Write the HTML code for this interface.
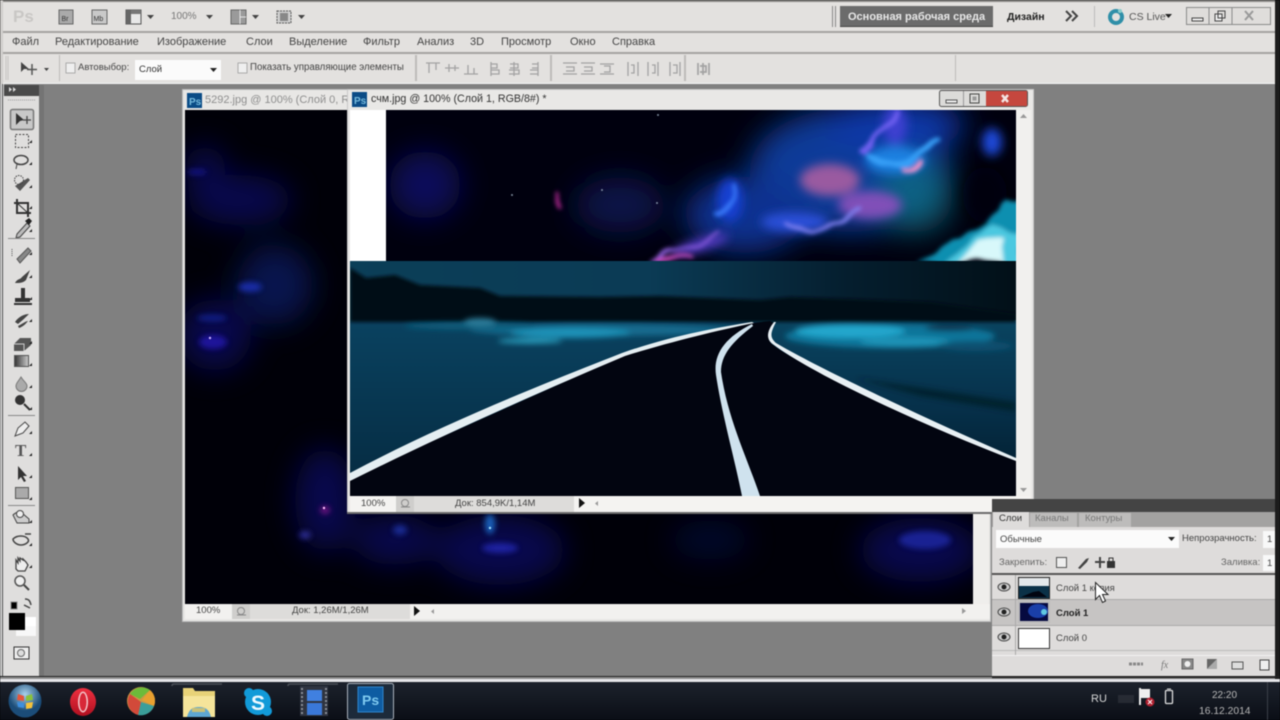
<!DOCTYPE html>
<html><head><meta charset="utf-8"><style>
html,body{margin:0;padding:0;background:#000}
#r{position:relative;width:1280px;height:720px;overflow:hidden;background:#808080;font-family:"Liberation Sans",sans-serif;font-size:11px;color:#444;filter:blur(.45px)}
.a{position:absolute}
.t{position:absolute;white-space:nowrap;line-height:12px}
svg{position:absolute;display:block}
</style></head><body><div id="r">
<div class="a" style="left:0;top:0;width:1275px;height:83px;background:#e3e1df"></div>
<div class="a" style="left:0;top:0;width:1275px;height:2px;background:#8a8886"></div>
<div class="a" style="left:0;top:31px;width:1275px;height:2px;background:#a5a3a1"></div>
<div class="a" style="left:0;top:52px;width:1275px;height:2px;background:#a5a3a1"></div>
<div class="a" style="left:0;top:83px;width:1275px;height:1px;background:#f5f5f5"></div>
<div class="a" style="left:1275px;top:0;width:5px;height:682px;background:#1c1c1c"></div>
<div class="a" style="left:0;top:0;width:3px;height:84px;background:#cfcdcb"></div>

<!-- app bar icons -->
<svg style="left:0;top:0" width="320" height="32" fill="none" stroke="#777">
<text x="13" y="22" font-family="Liberation Sans" font-size="17" font-weight="bold" fill="#c9c7c5" stroke="none">Ps</text>
<rect x="59" y="10" width="14" height="14" fill="#aaa" stroke="#666"/><text x="61.500" y="21" font-size="7" fill="#333" stroke="none" font-family="Liberation Sans">Br</text>
<rect x="92" y="10" width="15" height="14" fill="#c9c9c9" stroke="#666"/><text x="93.500" y="21" font-size="7" fill="#333" stroke="none" font-family="Liberation Sans">Mb</text>
<rect x="126" y="10" width="15" height="14" fill="#e8e8e8" stroke="#555"/><rect x="126" y="10" width="5" height="14" fill="#666" stroke="none"/><rect x="131" y="10" width="10" height="4" fill="#777" stroke="none"/>
<path d="M147 15h7l-3.500 4z" fill="#444" stroke="none"/>
<path d="M206 15h7l-3.500 4z" fill="#444" stroke="none"/>
<rect x="231" y="10" width="15" height="14" fill="#9a9a9a" stroke="#666"/><path d="M240 10v14M240 17h6" stroke="#e5e5e5"/>
<path d="M252 15h7l-3.500 4z" fill="#444" stroke="none"/>
<rect x="277" y="11" width="14" height="12" fill="#cfcfcf" stroke="#555" stroke-dasharray="2 1"/><rect x="280" y="13" width="8" height="8" fill="#888" stroke="none"/>
<path d="M298 15h7l-3.500 4z" fill="#444" stroke="none"/>
</svg>
<span class="t" style="left:171px;top:11px;color:#777;font-size:10px">100%</span>

<div class="a" style="left:832px;top:6px;width:1px;height:21px;background:#888"></div>
<div class="a" style="left:835px;top:6px;width:1px;height:21px;background:#888"></div>
<div class="a" style="left:840px;top:6px;width:153px;height:21px;background:#6b6b6b;border-bottom:1px solid #444;box-sizing:border-box"></div>
<span class="t" style="left:848px;top:11px;color:#e8e8e8;font-weight:bold;font-size:11px">Основная рабочая среда</span>
<span class="t" style="left:1007px;top:11px;color:#222;font-weight:bold;font-size:10.5px">Дизайн</span>
<svg style="left:1064px;top:9px" width="18" height="15" fill="none" stroke="#444" stroke-width="2"><path d="M2 2l5 5-5 5M8 2l5 5-5 5"/></svg>
<div class="a" style="left:1094px;top:6px;width:1px;height:21px;background:#bbb"></div>
<svg style="left:1105px;top:6px" width="22" height="22" fill="none"><circle cx="11" cy="11" r="6" stroke="#2f8fa8" stroke-width="4"/><circle cx="15" cy="5" r="2" fill="#8cc"/></svg>
<span class="t" style="left:1129px;top:11px;color:#555;font-size:10.5px">CS Live</span>
<svg style="left:1164px;top:14px" width="9" height="6"><path d="M1 0h7l-3.500 4z" fill="#222"/></svg>
<svg style="left:1185px;top:7px" width="88" height="20" fill="#dfdddb" stroke="#8a8a8a"><rect x="1.500" y=".5" width="84" height="17"/><path d="M24 0v18M47 0v18"/><rect x="7" y="11" width="11" height="3" fill="#eee" stroke="#444"/><rect x="30" y="7" width="7" height="7" fill="#eee" stroke="#444"/><rect x="33" y="4" width="7" height="7" fill="none" stroke="#444"/><path d="M60 4l8 9M68 4l-8 9" stroke="#999" stroke-width="2"/></svg>

<!-- menu -->
<span class="t" style="left:12px;top:36px">Файл</span>
<span class="t" style="left:55px;top:36px">Редактирование</span>
<span class="t" style="left:157px;top:36px">Изображение</span>
<span class="t" style="left:246px;top:36px">Слои</span>
<span class="t" style="left:289px;top:36px">Выделение</span>
<span class="t" style="left:363px;top:36px">Фильтр</span>
<span class="t" style="left:417px;top:36px">Анализ</span>
<span class="t" style="left:470px;top:36px">3D</span>
<span class="t" style="left:501px;top:36px">Просмотр</span>
<span class="t" style="left:570px;top:36px">Окно</span>
<span class="t" style="left:612px;top:36px">Справка</span>

<!-- options -->
<svg style="left:0;top:54px" width="960" height="29" fill="none" stroke="#999">
<path d="M6 2v24M8 2v24" stroke="#c5c3c1"/>
<path d="M21 8v10l3-3h5z" fill="#444" stroke="none"/><path d="M32 10v11M27 15.500h10" stroke="#555" stroke-width="1.500"/>
<path d="M44 14h5l-2.500 3z" fill="#444" stroke="none"/>
<path d="M59.500 1v26M415.500 1v26M416.500 1v26M550.500 1v26M551.500 1v26M684.500 1v26M685.500 1v26M955.500 1v26" stroke="#bdbbb9"/>
<rect x="66" y="9" width="9" height="10" fill="#efefef" stroke="#aaa"/>
<rect x="238" y="9" width="9" height="10" fill="#efefef" stroke="#aaa"/>
<g stroke="#a3a3a3" stroke-width="1.300"><path d="M426 9h14M429 9v10M436 9v7M445 14h14M449 10v8M455 11v6M464 20h14M468 11v9M474 14v6"/><path d="M491 8v14M491 10h6v4h-6M491 16h8v4h-8M514 8v14M510 10h8v4h-8M509 16h10v4h-10M538 8v14M532 10h6v4h-6M530 16h8v4h-8"/><path d="M563 9h14M566 13h8v4h-8M563 20h14M581 9h14M584 13h8v4h-8M581 20h14M600 20h14M604 12h6v6h-6M600 10h14"/><path d="M628 8v14M631 11h3v8h-3M638 8v14M648 8v14M652 11h3v8h-3M658 8v14M670 8v14M680 8v14M673 11h4v8h-4"/><path d="M698 9v12M703 9v12M709 9v12M700 12h6v6h-6" stroke-width="1.700"/></g>
</svg>
<span class="t" style="left:78px;top:62px;font-size:9.5px">Автовыбор:</span>
<div class="a" style="left:135px;top:60px;width:86px;height:20px;background:#fbfbfb"></div>
<span class="t" style="left:139px;top:64px;font-size:9.5px;color:#333">Слой</span>
<svg style="left:210px;top:68px" width="8" height="6"><path d="M0 0h7l-3.500 4z" fill="#222"/></svg>
<span class="t" style="left:250px;top:62px;font-size:9.7px">Показать управляющие элементы</span>

<!-- toolbox -->
<div class="a" style="left:0;top:84px;width:4px;height:598px;background:#d8d8d8"></div>
<div class="a" style="left:2px;top:84px;width:1px;height:598px;background:#555"></div>
<div class="a" style="left:4px;top:85px;width:35px;height:592px;background:#dfdedd"></div>
<div class="a" style="left:4px;top:85px;width:35px;height:11px;background:#4a4a4a"></div>
<div class="a" style="left:39px;top:85px;width:5px;height:592px;background:#747474"></div>
<svg style="left:0;top:84px" width="44" height="596" fill="none">
<path d="M9 3l3 2.500-3 2.500zM13 3l3 2.500-3 2.500z" fill="#ddd"/>
<path d="M8 16h27" stroke="#999" stroke-dasharray="1 1"/>
<rect x="10.500" y="25.500" width="23" height="20" rx="2" fill="#c8c8c8" stroke="#777" stroke-width="1.500"/>
<path d="M16 29v12l4-4 4-1z" fill="#333"/><path d="M27 32v8M23 36h8" stroke="#444" stroke-width="1.300"/>
<rect x="15.500" y="50.500" width="13" height="13" stroke="#444" stroke-dasharray="2 1.500"/>
<ellipse cx="21" cy="76" rx="7" ry="4.500" stroke="#444" stroke-width="1.500"/><path d="M17 80l-1 5" stroke="#444"/>
<path d="M15 102l13-8 2 2-10 11z" fill="#555"/><circle cx="19" cy="96" r="4.500" stroke="#444" stroke-dasharray="1.500 1"/>
<path d="M17 115v14h14M14 119h14v14" stroke="#333" stroke-width="2"/><path d="M17 119l11 10" stroke="#333"/>
<path d="M17 150l10-11 3 3-10 11-4 1z" fill="#bbb" stroke="#444"/><path d="M25 137l4-3 3 3-3 4z" fill="#222"/>
<path d="M8 154.500h27" stroke="#888"/>
<path d="M17 175l11-11 3 3-11 12z" fill="#888" stroke="#555"/><path d="M12 165v8" stroke="#555" stroke-dasharray="1 1"/>
<path d="M15 199c3-5 5-3 7-6l8-7-4 10c-3 3-6 3-11 3z" fill="#444"/>
<path d="M21 204h4v10h-4zM15 214h15v4h-15zM14 219h18v2h-18z" fill="#333"/>
<path d="M15 238c4-6 10-8 14-8-3 3-6 6-11 10zM18 242c4-2 8-5 10-5-3 4-6 6-9 7z" fill="#444"/>
<path d="M14 260l6-6h11v7l-7 6h-10z" fill="#555"/><path d="M14 260h10v7" stroke="#ccc"/>
<defs><linearGradient id="tg"><stop offset="0" stop-color="#333"/><stop offset="1" stop-color="#ccc"/></linearGradient></defs>
<rect x="14.500" y="271.500" width="14" height="11" fill="url(#tg)" stroke="#555"/>
<path d="M21 293c-3 5-5 6-5 9a5 5 0 0 0 11 0c0-3-3-4-6-9z" fill="#aaa" stroke="#777"/>
<circle cx="20" cy="316" r="5" fill="#333"/><path d="M24 320l6 6" stroke="#333" stroke-width="2"/>
<path d="M8 331.500h27" stroke="#888"/>
<path d="M15 352l3-8 7-6 4 4-6 7z" fill="#eee" stroke="#444"/>
<text x="15" y="372" font-family="Liberation Serif" font-size="17" font-weight="bold" fill="#555">T</text>
<path d="M18 382v14l3-3 3 5 2-1-3-5h4z" fill="#333"/>
<rect x="15.500" y="403.500" width="13" height="11" fill="#aaa" stroke="#555"/>
<path d="M8 421.500h27" stroke="#888"/>
<path d="M13 431c3-3 7-4 9-2l7 6v4h-12z" fill="#ccc" stroke="#444"/><circle cx="20" cy="430" r="3.500" fill="#eee" stroke="#444"/>
<path d="M13 455c4-4 12-4 15 0 2 3-3 6-7 6s-8-3-8-6zM25 450h6" stroke="#444" stroke-width="1.500"/>
<path d="M16 485v-9l2 3v-5l2 3v-3l3 2v-1l3 3 2 3-3 6h-7z" fill="#eee" stroke="#444" stroke-width="1.300"/>
<circle cx="20" cy="497" r="5" fill="#eee" stroke="#555" stroke-width="1.500"/><path d="M24 501l5 5" stroke="#444" stroke-width="2"/>
<rect x="11" y="518" width="6" height="7" fill="#000" stroke="#888"/>
<path d="M25 515c4 0 5 2 6 6M24 521l6 3" stroke="#444" stroke-width="1.500"/>
<rect x="25" y="533" width="11" height="14" fill="#fff"/><rect x="16" y="542" width="20" height="10" fill="#f8f8f8"/>
<rect x="9" y="529" width="16" height="17" fill="#000"/>
<rect x="14" y="563" width="15" height="12" fill="#eee" stroke="#333"/><circle cx="21" cy="569" r="3.500" stroke="#666" fill="#ddd"/>
<g fill="#222"><path d="M32 59h-3l3-3zM32 81h-3l3-3zM32 104h-3l3-3zM32 125h-3l3-3zM32 148h-3l3-3zM32 171h-3l3-3zM32 194h-3l3-3zM32 216h-3l3-3zM32 238h-3l3-3zM32 260h-3l3-3zM32 282h-3l3-3zM32 304h-3l3-3zM32 326h-3l3-3zM32 350h-3l3-3zM32 372h-3l3-3zM32 394h-3l3-3zM32 416h-3l3-3zM32 439h-3l3-3zM32 462h-3l3-3zM32 484h-3l3-3z"/></g>
</svg>

<!-- back window -->
<div class="a" style="left:182px;top:89px;width:809px;height:533px;background:#e8e7e5;border:1px solid #bbb;box-sizing:border-box"></div>
<svg style="left:187px;top:93px" width="15" height="15"><rect width="15" height="15" fill="#0b4c86"/><text x="2" y="12" font-size="10" fill="#7bd" font-weight="bold" font-family="Liberation Sans">Ps</text></svg>
<span class="t" style="left:205px;top:94px;color:#8e8e8e">5292.jpg @ 100% (Слой 0, R</span>
<svg style="left:185px;top:110px" width="788" height="494" viewBox="185 110 788 494">
<defs>
<filter id="b3" x="-100%" y="-100%" width="300%" height="300%"><feGaussianBlur stdDeviation="3"/></filter>
<filter id="b5" x="-100%" y="-100%" width="300%" height="300%"><feGaussianBlur stdDeviation="5"/></filter>
<filter id="b8" x="-100%" y="-100%" width="300%" height="300%"><feGaussianBlur stdDeviation="8"/></filter>
<filter id="b15" x="-100%" y="-100%" width="300%" height="300%"><feGaussianBlur stdDeviation="15"/></filter>
<filter id="b1" x="-30%" y="-30%" width="160%" height="160%"><feGaussianBlur stdDeviation="1.500"/></filter>
<filter id="ds" x="-20%" y="-20%" width="140%" height="140%"><feTurbulence type="fractalNoise" baseFrequency=".03" numOctaves="2" seed="4" result="n"/><feDisplacementMap in="SourceGraphic" in2="n" scale="18" xChannelSelector="R" yChannelSelector="G"/><feGaussianBlur stdDeviation="2"/></filter>
</defs>
<rect x="185" y="110" width="788" height="494" fill="#000008"/>
<g filter="url(#b15)" fill="#0a0e78" opacity=".62">
<ellipse cx="240" cy="200" rx="52" ry="25"/><ellipse cx="275" cy="285" rx="38" ry="40" fill="#0a2078"/><ellipse cx="215" cy="335" rx="36" ry="36"/><ellipse cx="325" cy="500" rx="30" ry="52"/>
<ellipse cx="500" cy="550" rx="65" ry="35"/><ellipse cx="920" cy="550" rx="60" ry="32"/><ellipse cx="395" cy="540" rx="42" ry="25"/><ellipse cx="710" cy="540" rx="40" ry="20" opacity=".5"/>
<ellipse cx="205" cy="170" rx="20" ry="25"/>
</g>
<g filter="url(#b3)" opacity=".85">
<ellipse cx="250" cy="287" rx="12" ry="5" fill="#1a30b8"/><ellipse cx="212" cy="318" rx="15" ry="3" fill="#12259a"/>
<ellipse cx="213" cy="342" rx="14" ry="7" fill="#2018a8"/><ellipse cx="197" cy="172" rx="10" ry="3" fill="#16168e"/>
<ellipse cx="490" cy="524" rx="5" ry="10" fill="#1c70d0"/><ellipse cx="500" cy="548" rx="18" ry="5" fill="#2028b0"/><ellipse cx="400" cy="530" rx="7" ry="5" fill="#1a30a0"/>
<ellipse cx="925" cy="540" rx="26" ry="9" fill="#1a28a0"/><ellipse cx="325" cy="510" rx="5" ry="4" fill="#80188a"/><ellipse cx="305" cy="535" rx="6" ry="4" fill="#3030a0"/>
</g>
<circle cx="210" cy="338" r="1.200" fill="#c8b0ff"/><circle cx="324" cy="508" r="1.200" fill="#ffc0ff"/><circle cx="490" cy="528" r="1.200" fill="#a0e0ff"/>
</svg>
<div class="a" style="left:973px;top:110px;width:16px;height:494px;background:#efeeec"></div>
<div class="a" style="left:185px;top:604px;width:805px;height:15px;background:#f2f1ef"></div>
<div class="a" style="left:232px;top:604px;width:18px;height:15px;background:#cfcecc"></div>
<div class="a" style="left:250px;top:604px;width:160px;height:15px;background:#dddcda"></div>
<span class="t" style="left:196px;top:605px;font-size:9.5px">100%</span>
<svg style="left:236px;top:606px" width="12" height="11" fill="none" stroke="#888"><circle cx="5" cy="5" r="3.500"/><path d="M1 9h9"/></svg>
<span class="t" style="left:292px;top:605px;font-size:9.5px">Док: 1,26M/1,26M</span>
<svg style="left:414px;top:605px" width="20" height="13"><path d="M0 1l6 5-6 5z" fill="#111"/><path d="M20 4l-3 2.500 3 2.500z" fill="#999"/></svg>
<svg style="left:961px;top:606px" width="8" height="10"><path d="M1 2l4 3-4 3z" fill="#999"/></svg>

<!-- front window -->
<div class="a" style="left:347px;top:89px;width:687px;height:425px;background:#e9e8e6;border:1px solid #c8c8c8;box-sizing:border-box"></div>
<svg style="left:352px;top:92px" width="15" height="15"><rect width="15" height="15" fill="#0b4c86"/><text x="2" y="12" font-size="10" fill="#7bd" font-weight="bold" font-family="Liberation Sans">Ps</text></svg>
<span class="t" style="left:371px;top:93px;color:#333;font-size:10.7px">счм.jpg @ 100% (Слой 1, RGB/8#) *</span>
<svg style="left:939px;top:90px" width="90" height="18" fill="none">
<rect x=".5" y=".5" width="88" height="16" rx="2" fill="#dcdbd9" stroke="#555"/>
<rect x="47" y="1" width="41" height="15" fill="#c5473e"/>
<path d="M24.500 1v15" stroke="#999"/>
<rect x="7" y="10" width="11" height="3" fill="#eee" stroke="#555"/>
<rect x="31" y="4" width="9" height="9" stroke="#444"/><rect x="33.500" y="6.500" width="4" height="4" fill="#999"/>
<path d="M63 5l6 7M69 5l-6 7" stroke="#f3e4e2" stroke-width="2.500"/>
</svg>
<svg style="left:350px;top:110px" width="666" height="386" viewBox="350 110 666 386">
<defs>
<linearGradient id="sky" x1="0" x2="1" y1="0" y2="0"><stop offset="0" stop-color="#0b3f58"/><stop offset=".45" stop-color="#0b3b55"/><stop offset=".75" stop-color="#051e2e"/><stop offset="1" stop-color="#021018"/></linearGradient>
<linearGradient id="gl" x1="0" x2="0" y1="0" y2="1"><stop offset="0" stop-color="#0a4260"/><stop offset="1" stop-color="#052a40"/></linearGradient>
<linearGradient id="gr" x1="0" x2="0" y1="0" y2="1"><stop offset="0" stop-color="#0a4460"/><stop offset=".5" stop-color="#06304a"/><stop offset="1" stop-color="#031a28"/></linearGradient>
</defs>
<rect x="350" y="110" width="666" height="151" fill="#00000e"/>
<g filter="url(#b15)">
<ellipse cx="425" cy="185" rx="36" ry="34" fill="#0a1068" opacity=".85"/>
<ellipse cx="620" cy="205" rx="45" ry="28" fill="#0a2060" opacity=".7"/>
<ellipse cx="850" cy="170" rx="100" ry="62" fill="#0a3a98"/>
<ellipse cx="895" cy="125" rx="70" ry="26" fill="#0c38a8"/>
<ellipse cx="745" cy="215" rx="60" ry="38" fill="#0a3090"/>
<ellipse cx="915" cy="195" rx="38" ry="38" fill="#0c6a80" opacity=".8"/>
</g>
<ellipse cx="985" cy="195" rx="22" ry="28" fill="#00000e" filter="url(#b8)" opacity=".8"/>
<g filter="url(#b5)">
<ellipse cx="830" cy="180" rx="30" ry="16" fill="#9a5aa0"/>
<ellipse cx="870" cy="205" rx="32" ry="14" fill="#8050b8"/>
<ellipse cx="895" cy="160" rx="30" ry="14" fill="#1c80e0"/>
<ellipse cx="795" cy="222" rx="34" ry="10" fill="#2a50d8"/>
<ellipse cx="730" cy="200" rx="13" ry="22" fill="#1840d0"/>
<ellipse cx="895" cy="125" rx="12" ry="20" fill="#3c40d0"/>
<ellipse cx="700" cy="245" rx="30" ry="6" fill="#5a3cc8" transform="rotate(-18 700 245)"/>
<ellipse cx="992" cy="142" rx="10" ry="14" fill="#1a48d8"/>
</g>
<g filter="url(#ds)" fill="none" stroke-linecap="round">
<path d="M895 112L868 152" stroke="#7060f0" stroke-width="5"/>
<path d="M873 155C890 175 905 165 940 140" stroke="#38a0f8" stroke-width="6"/>
<path d="M905 170L925 162" stroke="#f090c8" stroke-width="5"/>
<path d="M785 224C810 236 835 226 862 208" stroke="#8080f0" stroke-width="4"/>
<path d="M733 188C738 200 730 208 716 214" stroke="#3878f8" stroke-width="5"/>
<path d="M655 257L718 236" stroke="#9060e0" stroke-width="3"/>
<path d="M660 258h30" stroke="#c048b8" stroke-width="5"/>
<path d="M556 192L559 208" stroke="#b02890" stroke-width="3"/>
</g>
<g fill="#9ab" opacity=".8"><circle cx="512" cy="195" r="1"/><circle cx="602" cy="190" r="1"/><circle cx="657" cy="203" r="1"/><circle cx="658" cy="115" r="1"/></g>
<g filter="url(#ds)">
<path d="M915 262L950 240L985 225L1004 198L1022 200V262z" fill="#0f8fb0"/>
<path d="M945 262L972 236L992 226L1022 232V262z" fill="#4cc8e0"/>
<path d="M958 262L978 238L1006 238V262z" fill="#d8f8fa"/>
</g>
<rect x="350" y="110" width="36" height="151" fill="#fff"/>
<rect x="350" y="261" width="666" height="60" fill="url(#sky)"/>
<rect x="350" y="320" width="420" height="176" fill="url(#gl)"/>
<rect x="770" y="320" width="246" height="176" fill="url(#gr)"/>
<path d="M350 268L366 278L395 275L420 285L480 288L500 296L600 297L660 296L760 300L790 297L850 299L930 302L1016 314V322H350z" fill="#020f18" filter="url(#b1)"/>
<path d="M855 378L1016 402V412L920 396z" fill="#04202e" filter="url(#b3)"/>
<g filter="url(#b3)">
<ellipse cx="600" cy="330" rx="130" ry="6" fill="#126a8e"/>
<ellipse cx="470" cy="326" rx="65" ry="3.500" fill="#0f5d7c"/>
<ellipse cx="570" cy="333" rx="60" ry="5" fill="#1c92b8"/>
<ellipse cx="530" cy="341" rx="32" ry="2.500" fill="#2aa4c4"/>
<ellipse cx="480" cy="322" rx="16" ry="4" fill="#2a7a98"/>
<ellipse cx="890" cy="336" rx="105" ry="12" fill="#11759a"/>
<ellipse cx="850" cy="331" rx="55" ry="7" fill="#20a6cc"/>
<ellipse cx="905" cy="342" rx="45" ry="5" fill="#1c92b6"/>
<ellipse cx="950" cy="328" rx="25" ry="3" fill="#073650"/>
<ellipse cx="975" cy="346" rx="38" ry="5" fill="#0a5070"/>
</g>
<path d="M350 478L620 357C680 336 730 325 770 321L774 323C768 332 766 338 772 344C800 366 900 412 1016 460V496H350z" fill="#020510"/>
<path d="M350 473C440 425 540 385 622 353C670 336 720 327 752 322L754 323C715 331 670 342 625 356C540 392 440 436 350 481z" fill="#e4eef2"/>
<path d="M742 496C735 460 722 415 716 375C713 355 724 338 752 324L753 326C732 342 721 355 721 372C728 420 748 460 760 496z" fill="#cfe2ee"/>
<path d="M774 322C766 332 766 340 774 345C810 372 910 420 1016 461V458C915 414 815 366 776 343C769 337 771 332 776 322z" fill="#e8f0f4"/>
</svg>
<div class="a" style="left:1016px;top:110px;width:15px;height:386px;background:#f1f0ee"></div>
<div class="a" style="left:350px;top:496px;width:681px;height:16px;background:#f4f3f1"></div>
<div class="a" style="left:396px;top:496px;width:18px;height:16px;background:#cfcecc"></div>
<div class="a" style="left:414px;top:496px;width:160px;height:16px;background:#dddcda"></div>
<div class="a" style="left:347px;top:512px;width:645px;height:2px;background:#6c6c6c"></div>
<span class="t" style="left:361px;top:498px;font-size:9.5px">100%</span>
<svg style="left:400px;top:498px" width="12" height="11" fill="none" stroke="#888"><circle cx="5" cy="5" r="3.500"/><path d="M1 9h9"/></svg>
<span class="t" style="left:455px;top:498px;font-size:9.5px">Док: 854,9K/1,14M</span>
<svg style="left:579px;top:498px" width="20" height="12"><path d="M0 0l6 5-6 5z" fill="#111"/><path d="M19 3l-3 2.500 3 2.500z" fill="#999"/></svg>
<svg style="left:1020px;top:113px" width="8" height="6"><path d="M0 5l3.500-4 3.500 4z" fill="#999"/></svg>
<svg style="left:1020px;top:488px" width="8" height="6"><path d="M0 0l3.500 4 3.500-4z" fill="#999"/></svg>

<!-- layers panel -->
<div class="a" style="left:992px;top:499px;width:283px;height:178px;background:#dedcdb"></div>
<div class="a" style="left:992px;top:499px;width:283px;height:13px;background:#444"></div>
<div class="a" style="left:992px;top:512px;width:283px;height:15px;background:#a3a2a1"></div>
<div class="a" style="left:993px;top:512px;width:36px;height:16px;background:#dedcdb"></div>
<div class="a" style="left:1030px;top:513px;width:47px;height:14px;background:#bdbcbb"></div>
<div class="a" style="left:1079px;top:513px;width:52px;height:14px;background:#bdbcbb"></div>
<span class="t" style="left:999px;top:513px;font-size:9.5px;color:#333">Слои</span>
<span class="t" style="left:1035px;top:513px;font-size:9.5px;color:#777">Каналы</span>
<span class="t" style="left:1085px;top:513px;font-size:9.5px;color:#777">Контуры</span>
<div class="a" style="left:996px;top:530px;width:183px;height:18px;background:#fbfbfb"></div>
<span class="t" style="left:1000px;top:534px;font-size:9.5px">Обычные</span>
<svg style="left:1168px;top:537px" width="8" height="6"><path d="M0 0h7l-3.500 4z" fill="#222"/></svg>
<span class="t" style="left:1182px;top:533px;font-size:9.5px">Непрозрачность:</span>
<div class="a" style="left:1263px;top:531px;width:12px;height:17px;background:#f8f8f8"></div>
<span class="t" style="left:1267px;top:534px;font-size:9.5px">1</span>
<span class="t" style="left:999px;top:557px;font-size:9.5px;color:#666">Закрепить:</span>
<svg style="left:1054px;top:555px" width="66" height="15" fill="none"><rect x="2.500" y="2.500" width="10" height="10" fill="#eee" stroke="#555"/><path d="M24 13l8-9 3-1-2 4-7 7z" fill="#444"/><path d="M41 7h10M46 2v11" stroke="#444" stroke-width="2"/><rect x="53" y="6" width="8" height="7" fill="#333"/><path d="M55 6V3h4v3" stroke="#333"/></svg>
<span class="t" style="left:1221px;top:557px;font-size:9.5px;color:#666">Заливка:</span>
<div class="a" style="left:1263px;top:555px;width:12px;height:16px;background:#f8f8f8"></div>
<span class="t" style="left:1267px;top:558px;font-size:9.5px">1</span>
<div class="a" style="left:992px;top:573px;width:283px;height:2px;background:#555"></div>
<div class="a" style="left:992px;top:600px;width:283px;height:25px;background:#c6c4c3"></div>
<div class="a" style="left:992px;top:599px;width:283px;height:1px;background:#aaa"></div>
<div class="a" style="left:992px;top:625px;width:283px;height:1px;background:#aaa"></div>
<div class="a" style="left:992px;top:650px;width:283px;height:1px;background:#bbb"></div>
<div class="a" style="left:1015px;top:575px;width:1px;height:80px;background:#aaa"></div>
<svg style="left:996px;top:578px" width="18" height="70"><g id="e"><ellipse cx="8" cy="9" rx="6" ry="4" fill="#ccc" stroke="#444"/><circle cx="8" cy="9" r="2.500" fill="#222"/></g><use href="#e" y="25"/><use href="#e" y="50"/></svg>
<svg style="left:1018px;top:577px" width="32" height="22"><rect width="32" height="22" fill="#222"/><rect x="1" y="1" width="30" height="9" fill="#e4e8ea"/><rect x="1" y="9" width="30" height="12" fill="#0b3147"/><path d="M3 20l12-5 6-1 8 6z" fill="#020510"/></svg>
<svg style="left:1018px;top:601px" width="32" height="22"><rect width="32" height="22" fill="#bbb"/><rect x="2" y="2" width="28" height="18" fill="#060a40"/><ellipse cx="20" cy="10" rx="10" ry="7" fill="#1a3fa8"/><circle cx="26" cy="11" r="3" fill="#60c8e0"/></svg>
<div class="a" style="left:1018px;top:628px;width:30px;height:19px;background:#fff;border:1px solid #333"></div>
<span class="t" style="left:1056px;top:583px;font-size:9.5px">Слой 1 копия</span>
<span class="t" style="left:1056px;top:608px;font-size:9.5px;font-weight:bold;color:#222">Слой 1</span>
<span class="t" style="left:1056px;top:633px;font-size:9.5px">Слой 0</span>
<svg style="left:1094px;top:581px" width="16" height="26"><path d="M1.500 1.500v17l4-4 3 7 3-1.500-3-6.500h5.500z" fill="#fff" stroke="#222"/></svg>
<div class="a" style="left:992px;top:655px;width:283px;height:1px;background:#f2f2f2"></div>
<svg style="left:1125px;top:657px" width="150" height="14" fill="none" stroke="#888">
<path d="M4 7h14" stroke-width="3" stroke-dasharray="3 1"/>
<text x="36" y="11" font-size="10" font-style="italic" fill="#777" stroke="none" font-family="Liberation Serif">fx</text>
<rect x="57" y="2" width="11" height="10" fill="#888" stroke="#666"/><circle cx="62.500" cy="7" r="3" fill="#eee" stroke="none"/>
<path d="M82 12l10-10v10z" fill="#aaa" stroke="none"/><path d="M82 12V2h10" fill="#666" stroke="none"/>
<path d="M107 5h11v7h-11z" fill="#ddd" stroke="#555"/><rect x="135" y="3" width="9" height="10" fill="#eee" stroke="#444"/>
</svg>

<div class="a" style="left:0;top:676px;width:1280px;height:2px;background:#222"></div>
<div class="a" style="left:0;top:677px;width:992px;height:2px;background:#8f8f8f"></div>
<div class="a" style="left:0;top:679px;width:1280px;height:3px;background:#e6e6ea"></div>

<!-- taskbar -->
<div class="a" style="left:0;top:682px;width:1280px;height:38px;background:linear-gradient(#1c222c,#0b0e16)"></div>
<svg style="left:0;top:682px" width="1280" height="38" fill="none">
<defs>
<radialGradient id="orb" cx=".5" cy=".3"><stop offset="0" stop-color="#a9d2ec"/><stop offset="1" stop-color="#1b4c78"/></radialGradient>
<linearGradient id="op" x1="0" y1="0" x2="0" y2="1"><stop offset="0" stop-color="#ee3040"/><stop offset="1" stop-color="#b01020"/></linearGradient>
</defs>
<circle cx="25" cy="19" r="16.500" fill="url(#orb)"/>
<path d="M18 12l6 2v5l-7-1z" fill="#e5553a"/><path d="M26 14l6-2 1 6-7 1z" fill="#8ac23a"/><path d="M17 20l7 1v5l-6-1z" fill="#3d8fe0"/><path d="M26 21l7-1-1 6-6 1z" fill="#f5c23a"/>
<ellipse cx="83" cy="20" rx="13" ry="14" fill="url(#op)"/><ellipse cx="83" cy="20" rx="5" ry="10.500" fill="#f4c8cc"/><ellipse cx="83" cy="20" rx="3.500" ry="9" fill="#d82838"/>
<circle cx="141" cy="19" r="14" fill="#c94"/><path d="M130 12a14 14 0 0 1 20-4l-10 9z" fill="#6dbb3a"/><path d="M150 8a14 14 0 0 1 4 16l-12-6z" fill="#e8a030"/><path d="M154 24a14 14 0 0 1-16 9l3-13z" fill="#3a9e9a"/><path d="M130 12a14 14 0 0 0 8 21l3-13z" fill="#d24a3a"/>
<path d="M172 4q0-2 2-2h48" stroke="#4a4f57" stroke-width="1.500"/>
<path d="M183 6h10l2 3h20v26h-32z" fill="#e8d278"/><path d="M183 14h32v21h-32z" fill="#f5e49a"/><path d="M187 35c2-8 6-10 12-10s10 2 12 10z" fill="#5ea7d2"/><rect x="192" y="26" width="13" height="4" fill="#c8c078"/>
<circle cx="258" cy="20" r="13" fill="#129ad8"/><circle cx="249" cy="11" r="5" fill="#129ad8"/><circle cx="267" cy="29" r="5" fill="#129ad8"/>
<text x="251" y="28" font-family="Liberation Sans" font-size="21" font-weight="bold" fill="#eef9ff" stroke="none">S</text>
<path d="M288 4q0-2 2-2h48" stroke="#4a4f57" stroke-width="1.500"/>
<rect x="300" y="4" width="28" height="30" fill="#2f3440"/><rect x="307" y="8" width="15" height="11" fill="#4080e0"/><rect x="307" y="21" width="15" height="12" fill="#3a78d8"/>
<path d="M302 6v28M326 6v28" stroke="#8a8f98" stroke-width="2" stroke-dasharray="2 2"/>
<rect x="347.500" y="1.500" width="46" height="36" rx="2" fill="#1c2a3a" stroke="#aab2bc"/>
<rect x="358" y="5" width="25" height="25" fill="#0e5ca2"/><rect x="358" y="5" width="25" height="25" fill="none" stroke="#2f86cc"/>
<text x="362" y="23" font-family="Liberation Sans" font-size="14" font-weight="bold" fill="#7fcaf0" stroke="none">Ps</text>
<rect x="1118" y="13" width="16" height="8" fill="#2c3038" opacity=".8"/>
<path d="M1140 6v17" stroke="#eee" stroke-width="2"/><path d="M1141 7h9v9h-9z" fill="#eee"/><circle cx="1150" cy="20" r="4.500" fill="#b02030"/><path d="M1148 18l4 4M1152 18l-4 4" stroke="#fff"/>
<rect x="1165.500" y="8.500" width="7" height="13" rx="1" stroke="#ddd" stroke-width="1.300"/><path d="M1167 7h4" stroke="#ddd"/>
<path d="M1267.500 0v38" stroke="#3a3f48"/>
</svg>
<span class="t" style="left:1091px;top:693px;color:#d8d8d8;font-size:11px">RU</span>
<span class="t" style="left:1212px;top:690px;color:#b8b8b8;font-size:10px">22:20</span>
<span class="t" style="left:1199px;top:706px;color:#b8b8b8;font-size:10.3px">16.12.2014</span>
</div></body></html>
